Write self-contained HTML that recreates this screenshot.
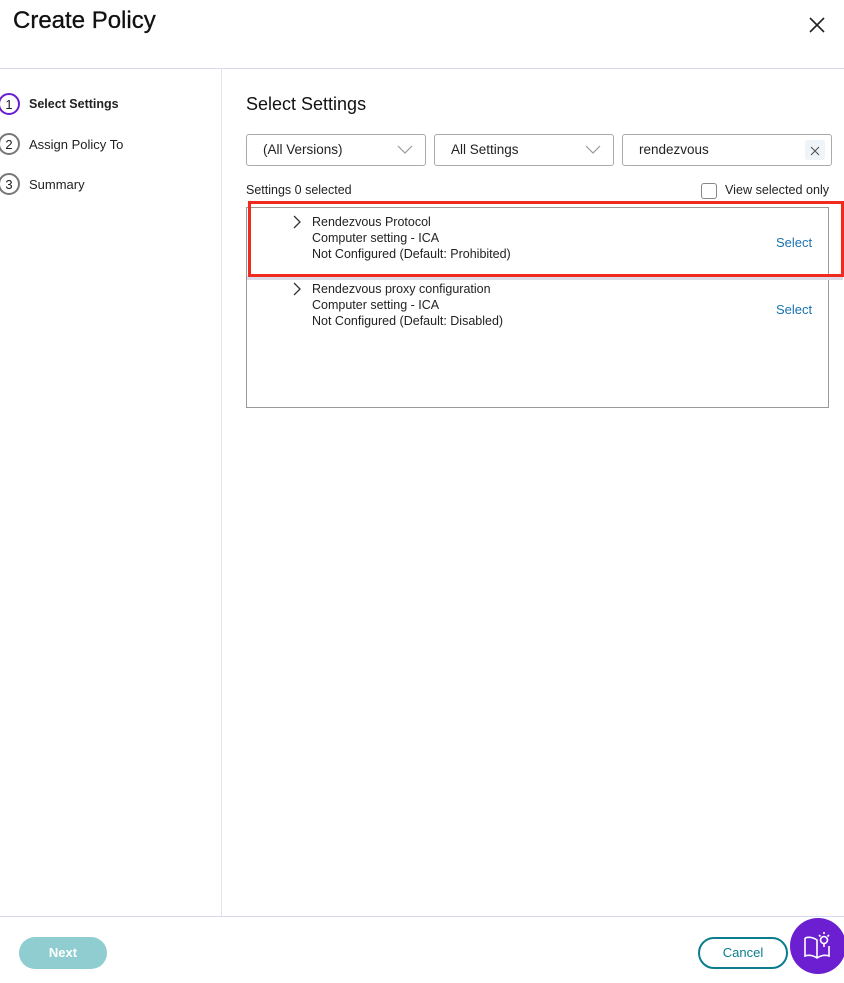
<!DOCTYPE html>
<html><head><meta charset="utf-8"><style>
*{box-sizing:border-box;margin:0;padding:0}
body{width:844px;height:983px;background:#fff;font-family:"Liberation Sans",sans-serif;color:#222;position:relative;overflow:hidden;font-size:13px}
.abs{position:absolute}
.step{position:absolute;left:0;display:flex;align-items:center;font-size:13px}
.circ{width:22px;height:22px;border-radius:50%;border:2px solid #777;margin-left:-2px;display:flex;align-items:center;justify-content:center;font-size:13px;margin-right:9px}
.dd{position:absolute;top:134px;height:32px;border:1px solid #aaa;border-radius:3px;font-size:13.5px;padding-left:16px;line-height:30px}
.row{position:absolute;left:312px;font-size:12.5px;line-height:16px}
.sel{position:absolute;left:776px;color:#1a73b0;font-size:13px}
</style></head><body>
<div class="abs" style="left:13px;top:7px;font-size:24px;color:#111;-webkit-text-stroke:0.3px #111">Create Policy</div>
<svg class="abs" style="left:808px;top:16px" width="18" height="18"><path d="M2 2L16 16M16 2L2 16" stroke="#222" stroke-width="1.6"/></svg>
<div class="abs" style="left:0;top:68px;width:844px;height:1px;background:#d8d8f0"></div>
<div class="abs" style="left:221px;top:69px;width:1px;height:847px;background:#e4e4ee"></div>
<div class="abs" style="left:0;top:916px;width:844px;height:1px;background:#d8d8f0"></div>

<div class="step" style="top:93px"><div class="circ" style="border-color:#6a1ed0">1</div><b style="font-weight:bold;font-size:12.5px">Select Settings</b></div>
<div class="step" style="top:133px"><div class="circ">2</div>Assign Policy To</div>
<div class="step" style="top:173px"><div class="circ">3</div>Summary</div>

<div class="abs" style="left:246px;top:94px;font-size:18px;color:#111">Select Settings</div>
<div class="dd" style="left:246px;width:180px">(All Versions)<svg class="abs" style="right:12px;top:10px" width="16" height="10"><path d="M1 1L8 8L15 1" stroke="#999" fill="none" stroke-width="1.2"/></svg></div>
<div class="dd" style="left:434px;width:180px">All Settings<svg class="abs" style="right:12px;top:10px" width="16" height="10"><path d="M1 1L8 8L15 1" stroke="#999" fill="none" stroke-width="1.2"/></svg></div>
<div class="dd" style="left:622px;width:210px">rendezvous<div class="abs" style="right:6px;top:5px;width:20px;height:20px;background:#eef4f8;border-radius:3px"></div><svg class="abs" style="right:11px;top:11px" width="10" height="10"><path d="M1 1L9 9M9 1L1 9" stroke="#555" stroke-width="1.1"/></svg></div>

<div class="abs" style="left:246px;top:183px;font-size:12.5px">Settings 0 selected</div>
<div class="abs" style="left:701px;top:183px;width:16px;height:16px;border:1px solid #888;border-radius:3px"></div>
<div class="abs" style="left:725px;top:183px;font-size:12.6px">View selected only</div>

<div class="abs" style="left:246px;top:207px;width:583px;height:201px;border:1px solid #999"></div>
<div class="abs" style="left:247px;top:276px;width:596px;height:4px;background:#dcdce8"></div>
<div class="abs" style="left:248px;top:201px;width:596px;height:76px;border:3px solid #f02a1e"></div>

<svg class="abs" style="left:292px;top:215px" width="10" height="14"><path d="M2 1L8 7L2 13" stroke="#333" fill="none" stroke-width="1.3"/></svg>
<div class="row" style="top:214px">Rendezvous Protocol<br>Computer setting - ICA<br>Not Configured (Default: Prohibited)</div>
<div class="sel" style="top:235px">Select</div>

<svg class="abs" style="left:292px;top:282px" width="10" height="14"><path d="M2 1L8 7L2 13" stroke="#333" fill="none" stroke-width="1.3"/></svg>
<div class="row" style="top:281px">Rendezvous proxy configuration<br>Computer setting - ICA<br>Not Configured (Default: Disabled)</div>
<div class="sel" style="top:302px">Select</div>

<div class="abs" style="left:19px;top:937px;width:88px;height:32px;border-radius:16px;background:#8fcdd0;color:#fff;font-weight:bold;font-size:13px;text-align:center;line-height:32px">Next</div>
<div class="abs" style="left:698px;top:937px;width:90px;height:32px;border-radius:16px;border:2px solid #0b7d8c;color:#0b7d8c;font-size:13px;text-align:center;line-height:28px">Cancel</div>
<div class="abs" style="left:790px;top:918px;width:56px;height:56px;border-radius:50%;background:#6b1fd1"></div>
<svg class="abs" style="left:802px;top:930px" width="32" height="32" fill="none" stroke="#fff" stroke-width="1.6"><path d="M3 8L3 26Q9 24 15 28Q21 24 27 26L27 16"/><path d="M3 8Q9 6 15 10L15 28"/><circle cx="22" cy="10" r="3.5"/><path d="M22 14L22 17M17 5L18.5 6.5M27 5L25.5 6.5M22 2L22 4"/></svg>
</body></html>
